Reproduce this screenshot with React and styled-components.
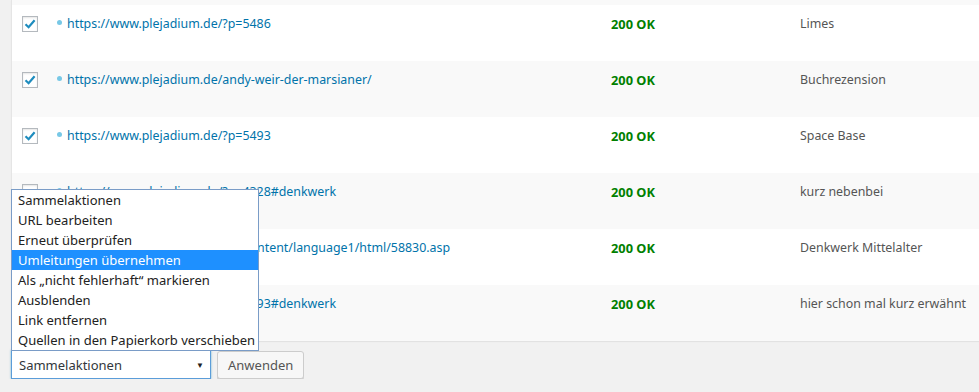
import React from "react";
import styled, { createGlobalStyle } from "styled-components";

const GlobalStyle = createGlobalStyle`
  html, body { margin: 0; padding: 0; background: #f1f1f1; }
  body {
    font-family: "Noto Sans", "Open Sans", sans-serif;
    font-size: 13px;
    color: #555;
    overflow: hidden;
  }
`;

const Page = styled.div`
  padding-left: 11px;
  width: 979px;
  box-sizing: border-box;
`;

const Table = styled.div`
  background: #fff;
  border-left: 1px solid #e5e5e5;
  box-shadow: 0 1px 1px rgba(0, 0, 0, 0.06);
  font-size: 12.4px;
`;

const Tail = styled.div`
  height: 5px;
  background: #f9f9f9;
`;

const Row = styled.div`
  display: grid;
  grid-template-columns: 35px 554px 189px 1fr;
  height: 56px;
  box-sizing: border-box;
  padding: 10px 0 0 10px;
  background: ${(p) => (p.$striped ? "#f9f9f9" : "#fff")};
  line-height: 18px;
`;

const Check = styled.span`
  width: 16px;
  height: 16px;
  margin-top: 1px;
  box-sizing: border-box;
  border: 1px solid #b4b9be;
  background: #fff;
  box-shadow: inset 0 1px 2px rgba(0, 0, 0, 0.1);
  display: flex;
  align-items: center;
  justify-content: center;
`;

const LinkCell = styled.div`
  display: flex;
  align-items: center;
  height: 18px;
  white-space: nowrap;
`;

const Dot = styled.span`
  width: 5px;
  height: 5px;
  border-radius: 50%;
  background: #78c8e6;
  margin: 0 5px 4px 0;
  flex: none;
`;

const Url = styled.a`
  color: #0073aa;
  text-decoration: none;
`;

const Status = styled.div`
  color: #008000;
  font-weight: 700;
  font-size: 12.8px;
`;

const Source = styled.div`
  color: #555;
  white-space: nowrap;
`;

const Footer = styled.div`
  display: flex;
  gap: 6px;
  padding-top: 9px;
`;

const SelectWrap = styled.div`
  position: relative;
`;

const SelectBox = styled.div`
  width: 200px;
  height: 29px;
  box-sizing: border-box;
  border: 1px solid #5b9dd9;
  box-shadow: 0 0 2px rgba(30, 140, 190, 0.6);
  background: #fff;
  color: #32373c;
  display: flex;
  align-items: center;
  justify-content: space-between;
  padding: 0 6px 0 7px;
`;

const Arrow = styled.span`
  font-size: 8px;
  color: #222;
`;

const OptionList = styled.ul`
  position: absolute;
  left: 0;
  bottom: 100%;
  margin: 0 0 -1px;
  padding: 0;
  list-style: none;
  width: 248px;
  box-sizing: border-box;
  border: 1px solid #7a9cc7;
  background: #fff;
  z-index: 2;
`;

const Option = styled.li`
  height: 20px;
  line-height: 20px;
  padding-left: 6px;
  color: ${(p) => (p.$active ? "#fff" : "#222")};
  background: ${(p) => (p.$active ? "#1e90ff" : "transparent")};
  white-space: nowrap;
`;

const Button = styled.button`
  height: 28px;
  margin-top: 1px;
  padding: 0 10px;
  font: inherit;
  color: #555;
  background: #f7f7f7;
  border: 1px solid #ccc;
  border-radius: 3px;
  box-shadow: 0 1px 0 #ccc;
`;

const rows = [
  ["https://www.plejadium.de/?p=5486", "Limes"],
  ["https://www.plejadium.de/andy-weir-der-marsianer/", "Buchrezension"],
  ["https://www.plejadium.de/?p=5493", "Space Base"],
  ["https://www.plejadium.de/?p=4328#denkwerk", "kurz nebenbei"],
  ["https://www.plejadium.de/wp-content/language1/html/58830.asp", "Denkwerk Mittelalter"],
  ["https://www.plejadium.de/?p=5493#denkwerk", "hier schon mal kurz erwähnt"],
];

const options = [
  "Sammelaktionen",
  "URL bearbeiten",
  "Erneut überprüfen",
  "Umleitungen übernehmen",
  "Als „nicht fehlerhaft“ markieren",
  "Ausblenden",
  "Link entfernen",
  "Quellen in den Papierkorb verschieben",
];

function CheckMark() {
  return (
    <svg width="14" height="14" viewBox="0 0 14 14">
      <path d="M2.5 7.2 L5.6 10.2 L11.6 3.2" fill="none" stroke="#1e8cbe" strokeWidth="2.2" strokeLinejoin="miter" />
    </svg>
  );
}

export default function App() {
  return (
    <>
      <GlobalStyle />
      <Page>
        <Table>
          <Tail />
          {rows.map(([url, src], i) => (
            <Row key={i} $striped={i % 2 === 1}>
              <Check>{i < 3 && <CheckMark />}</Check>
              <LinkCell>
                <Dot />
                <Url>{url}</Url>
              </LinkCell>
              <Status>200 OK</Status>
              <Source>{src}</Source>
            </Row>
          ))}
        </Table>
        <Footer>
          <SelectWrap>
            <OptionList>
              {options.map((o, i) => (
                <Option key={o} $active={i === 3}>
                  {o}
                </Option>
              ))}
            </OptionList>
            <SelectBox>
              <span>Sammelaktionen</span>
              <Arrow>▼</Arrow>
            </SelectBox>
          </SelectWrap>
          <Button>Anwenden</Button>
        </Footer>
      </Page>
    </>
  );
}
